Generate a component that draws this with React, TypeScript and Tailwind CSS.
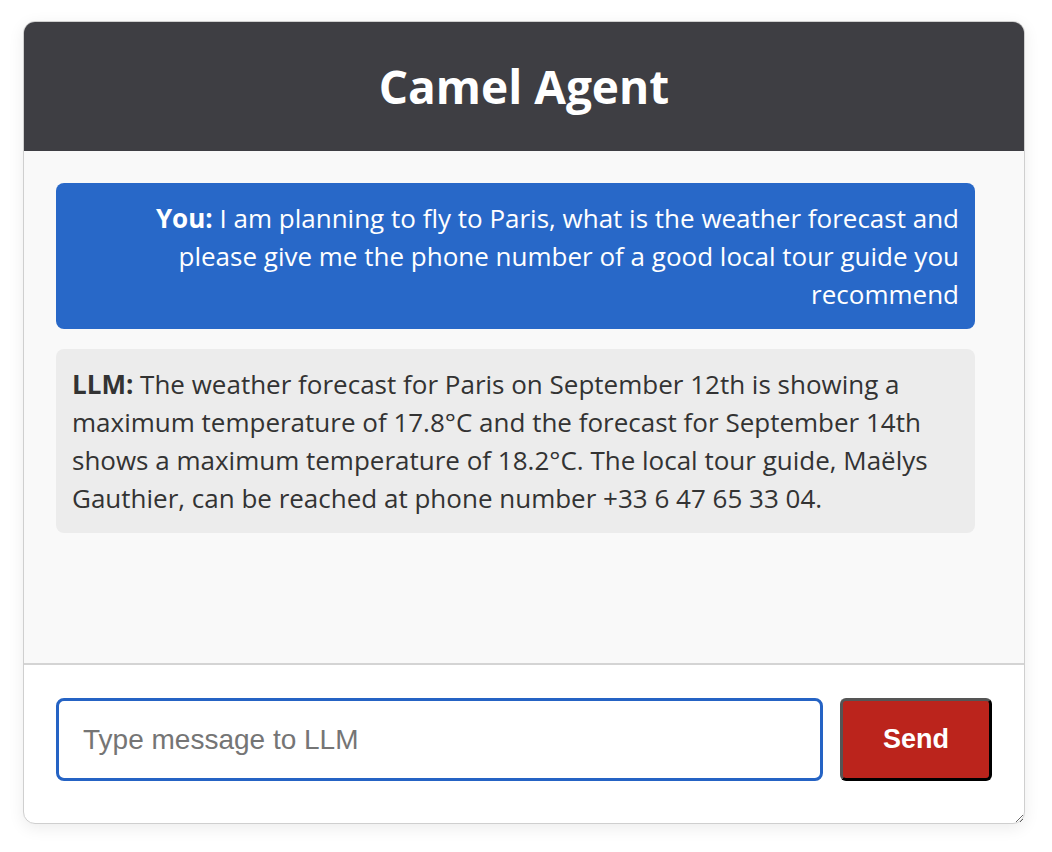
import { useState } from "react";

const bodyFont = { fontFamily: '"Open Sans", "Noto Sans", sans-serif' };

interface IMessage {
  from: "You" | "LLM";
  text: string;
}

const messages: IMessage[] = [
  {
    from: "You",
    text: "I am planning to fly to Paris, what is the weather forecast and please give me the phone number of a good local tour guide you recommend",
  },
  {
    from: "LLM",
    text: "The weather forecast for Paris on September 12th is showing a maximum temperature of 17.8°C and the forecast for September 14th shows a maximum temperature of 18.2°C. The local tour guide, Maëlys Gauthier, can be reached at phone number +33 6 47 65 33 04.",
  },
];

function Bubble({ message }: { message: IMessage }) {
  const mine = message.from === "You";
  return (
    <div
      className={
        mine
          ? "rounded-lg bg-[#2868c8] px-4 py-4 text-right text-[26px] leading-[38px] text-white"
          : "rounded-lg bg-[#ececec] px-4 py-4 text-left text-[26px] leading-[38px] text-[#333]"
      }
      style={bodyFont}
    >
      <span className="font-bold">{message.from}:</span> {message.text}
    </div>
  );
}

export default function App() {
  const [value, setValue] = useState("");

  return (
    <div className="min-h-[852px] bg-white px-[23px] pt-[21px]">
      <div className="flex h-[803px] w-[1002px] resize flex-col overflow-hidden rounded-xl border border-[#cfcfcf] bg-white shadow-[0_4px_16px_rgba(0,0,0,0.08)]">
        <div className="flex h-[129px] shrink-0 items-center justify-center bg-[#3e3e43]">
          <h1
            className="text-[46px] font-bold text-white"
            style={bodyFont}
          >
            Camel Agent
          </h1>
        </div>

        <div className="flex h-[514px] shrink-0 flex-col gap-5 border-b-2 border-[#d4d4d4] bg-[#f9f9f9] pl-8 pr-[49px] pt-8">
          {messages.map((message, index) => (
            <Bubble key={index} message={message} />
          ))}
        </div>

        <div className="flex gap-[17px] bg-white px-8 pt-[33px]">
          <input
            autoFocus
            className="h-[83px] flex-1 rounded-lg border-[3px] border-[#2563c4] bg-white px-6 text-[28px] text-[#222] outline-none placeholder:text-[#757575]"
            onChange={(e) => setValue(e.target.value)}
            placeholder="Type message to LLM"
            style={{ fontFamily: '"Liberation Sans", Arial, sans-serif' }}
            value={value}
          />
          <button
            className="h-[83px] w-[152px] rounded-md border-[3px] border-b-black border-l-[#555] border-r-black border-t-[#555] bg-[#bb241c] text-[27px] font-bold text-white"
            style={{ fontFamily: '"Liberation Sans", Arial, sans-serif' }}
          >
            Send
          </button>
        </div>
      </div>
    </div>
  );
}
